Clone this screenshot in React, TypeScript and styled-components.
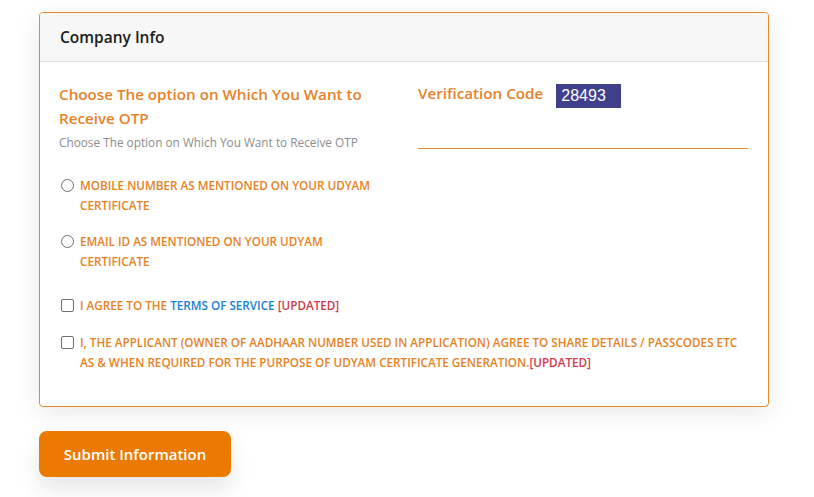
import styled, {createGlobalStyle} from 'styled-components';

const GlobalStyle = createGlobalStyle`
	body {
		margin: 0;
		background: #ffffff;
		font-family: "Open Sans", "Noto Sans", sans-serif;
	}
`

const Page = styled.div`
	padding: 12px 0 20px 39px;
	width: 730px;
`

const Card = styled.div`
	border: 1px solid #e58a2b;
	border-radius: 4px;
	background: #fff;
	box-shadow: 0 6px 24px rgba(0,0,0,0.09);
	overflow: hidden;
`

const CardHeader = styled.div`
	height: 48px;
	display: flex;
	align-items: center;
	padding: 0 20px;
	background: #f7f7f7;
	border-bottom: 1px solid #dcdcdc;
	font-size: 15.5px;
	font-weight: 600;
	color: #1c1c1c;
`

const CardBody = styled.div`
	padding: 20px 19px 34px 19px;
`

const Columns = styled.div`
	display: grid;
	grid-template-columns: 330px 330px;
	column-gap: 29px;
`

const Title = styled.div`
	font-size: 15.2px;
	font-weight: 600;
	line-height: 24px;
	color: #e6822a;
`

const Hint = styled.div`
	font-size: 11.8px;
	color: #8c8c8c;
	margin-top: 4px;
	line-height: 16px;
`

const Options = styled.div`
	display: flex;
	flex-direction: column;
	gap: 16px;
	margin-top: 25px;
`

const Option = styled.label`
	display: flex;
	align-items: flex-start;
	gap: 6px;
	font-size: 11.7px;
	font-weight: 600;
	line-height: 20px;
	color: #e6821f;
	text-transform: uppercase;
`

const Radio = styled.span`
	flex: none;
	width: 11px;
	height: 11px;
	margin: 4px 0 0 2px;
	border: 1px solid #6e6e6e;
	border-radius: 50%;
	background: #fff;
`

const Check = styled.span`
	flex: none;
	width: 11px;
	height: 11px;
	margin: 4px 0 0 2px;
	border: 1px solid #6e6e6e;
	border-radius: 2px;
	background: #fff;
`

const Link = styled.span`
	color: #1a7fd6;
`

const Updated = styled.span`
	color: #d03a4a;
`

const CodeRow = styled.div`
	display: flex;
	align-items: flex-start;
	gap: 13px;
	margin-top: -1px;
`

const Captcha = styled.div`
	margin-top: 3px;
	width: 65px;
	height: 24px;
	background: #3f3f8b;
	color: #fff;
	font-family: "Liberation Sans", Arial, sans-serif;
	font-size: 16px;
	line-height: 24px;
	padding-left: 5px;
	box-sizing: border-box;
`

const CodeInput = styled.div`
	margin-top: 40px;
	border-bottom: 1px solid #e0902f;
`

const Agreements = styled.div`
	display: flex;
	flex-direction: column;
	gap: 17px;
	margin-top: 24px;
`

const SubmitButton = styled.button`
	margin-top: 24px;
	width: 192px;
	height: 46px;
	border: none;
	border-radius: 8px;
	background: #ec7a00;
	color: #fff;
	font-family: "Open Sans", "Noto Sans", sans-serif;
	font-size: 15px;
	font-weight: 600;
	box-shadow: 0 12px 22px rgba(0,0,0,0.10);
`

export default function App() {
	return (
		<>
			<GlobalStyle/>
			<Page>
				<Card>
					<CardHeader>Company Info</CardHeader>
					<CardBody>
						<Columns>
							<div>
								<Title>Choose The option on Which You Want to Receive OTP</Title>
								<Hint>Choose The option on Which You Want to Receive OTP</Hint>
								<Options>
									<Option><Radio/>Mobile Number as mentioned on your Udyam Certificate</Option>
									<Option><Radio/>Email ID as mentioned on your Udyam Certificate</Option>
								</Options>
							</div>
							<div>
								<CodeRow>
									<Title>Verification Code</Title>
									<Captcha>28493</Captcha>
								</CodeRow>
								<CodeInput/>
							</div>
						</Columns>
						<Agreements>
							<Option><Check/><span>I agree to the <Link>Terms of Service</Link> <Updated>[Updated]</Updated></span></Option>
							<Option><Check/><span>I, the applicant (owner of Aadhaar number used in application) agree to share details / passcodes etc as &amp; when required for the purpose of Udyam Certificate generation.<Updated>[Updated]</Updated></span></Option>
						</Agreements>
					</CardBody>
				</Card>
				<SubmitButton>Submit Information</SubmitButton>
			</Page>
		</>
	)
}
